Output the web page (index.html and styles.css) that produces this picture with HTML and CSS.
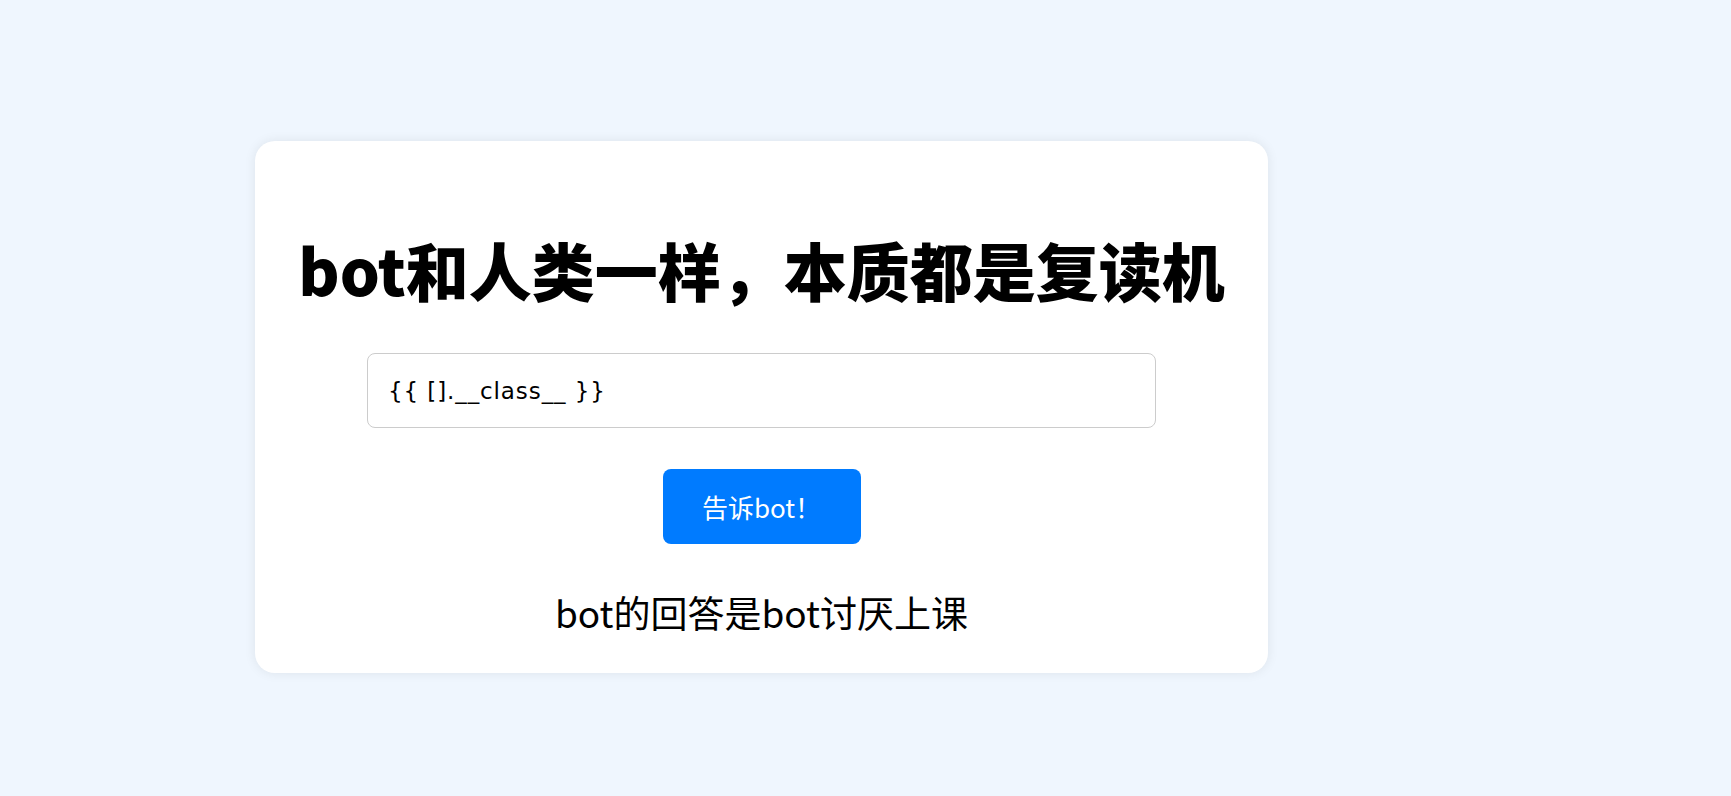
FILE: index.html
```html
<!DOCTYPE html>
<html lang="zh-CN">
<head>
<meta charset="utf-8">
<title>bot</title>
<link rel="stylesheet" href="styles.css">
</head>
<body>
<main class="page">
  <section class="card">
    <h1 class="title">bot和人类一样，本质都是复读机</h1>
    <form class="form">
      <input class="field" type="text" value="{{ [].__class__ }}">
      <button class="btn" type="button">告诉bot！</button>
    </form>
    <p class="answer">bot的回答是bot讨厌上课</p>
  </section>
</main>
</body>
</html>
```
FILE: styles.css
```css
html, body {
  margin: 0;
  padding: 0;
}
body {
  background: #eff6fe;
  font-family: "Noto Sans CJK SC", "Noto Sans", sans-serif;
  color: #000;
  height: 796px;
  overflow: hidden;
}
.page {
  display: flex;
  padding: 141px 0 0 255px;
}
.card {
  box-sizing: border-box;
  width: 1013px;
  height: 532px;
  background: #fff;
  border-radius: 20px;
  box-shadow: 0 0 12px rgba(0, 0, 0, 0.08);
  padding: 88px 40px 0;
  display: flex;
  flex-direction: column;
  align-items: center;
}
.title {
  margin: 0;
  font-size: 63px;
  line-height: 80px;
  font-weight: 900;
  white-space: nowrap;
  letter-spacing: 0;
}
.form {
  margin: 44px 0 0;
  display: flex;
  flex-direction: column;
  align-items: center;
  gap: 41px;
}
.field {
  box-sizing: border-box;
  width: 789px;
  height: 75px;
  border: 1px solid #cccccc;
  border-radius: 8px;
  padding: 0 20px;
  font-family: "DejaVu Sans", sans-serif;
  font-size: 23px;
  letter-spacing: 0.9px;
  color: #000;
  outline: none;
}
.btn {
  box-sizing: border-box;
  width: 198px;
  height: 75px;
  border: none;
  border-radius: 8px;
  background: #007bff;
  color: #fff;
  font-family: "Noto Sans CJK SC", "Noto Sans", sans-serif;
  font-size: 26px;
  padding: 0;
}
.answer {
  margin: 44px 0 0;
  font-size: 37px;
  line-height: 48px;
}
```
